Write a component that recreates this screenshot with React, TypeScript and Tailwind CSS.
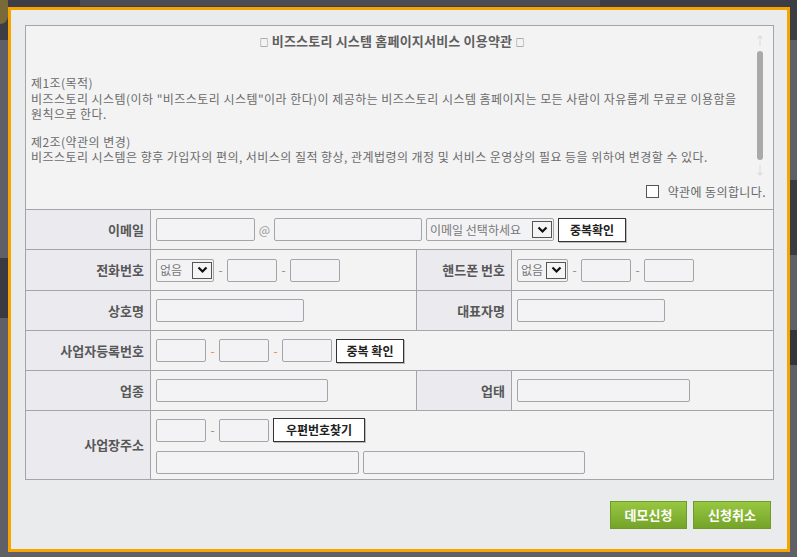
import React from "react";

const font = { fontFamily: '"Noto Sans CJK KR", "Noto Sans", sans-serif' };

function Input({ w }: { w: string }) {
  return (
    <div
      className={`${w} h-[23px] shrink-0 rounded-[2px] border border-[#a3a5a8] bg-[#f3f3f5]`}
    />
  );
}

function Chevron() {
  return (
    <svg width="11" height="8" viewBox="0 0 11 8">
      <path d="M1.5 1.5 L5.5 5.5 L9.5 1.5" fill="none" stroke="#111" strokeWidth="2.2" />
    </svg>
  );
}

function Select({ w, label }: { w: string; label: string }) {
  return (
    <div
      className={`${w} h-[23px] shrink-0 flex items-center justify-between rounded-[2px] border border-[#a3a5a8] bg-[#f3f3f5] pl-[3px] pr-[1px]`}
    >
      <span className="text-[12px] leading-none text-[#777]">{label}</span>
      <span className="w-[20px] h-[17px] flex items-center justify-center border border-[#555] bg-[#f5f5f5]">
        <Chevron />
      </span>
    </div>
  );
}

function Dash({ orange }: { orange?: boolean }) {
  return (
    <span
      className={`w-[13px] shrink-0 text-center text-[12px] ${orange ? "text-[#d98a4a]" : "text-[#888]"}`}
    >
      -
    </span>
  );
}

function SmallBtn({ w, children }: { w: string; children: React.ReactNode }) {
  return (
    <button
      type="button"
      className={`${w} h-[24px] shrink-0 border border-[#333] bg-white text-[12px] font-bold text-[#222] shadow-[1px_1px_0_#bbb]`}
    >
      {children}
    </button>
  );
}

function Label({ w, children, left }: { w: string; children: React.ReactNode; left?: boolean }) {
  return (
    <div
      className={`${w} shrink-0 self-stretch flex items-center justify-end pr-[6px] bg-[#ebebef] border-r border-[#a3a5a8] ${left ? "border-l" : ""} text-[13px] font-bold text-[#575757]`}
    >
      {children}
    </div>
  );
}

export default function App() {
  return (
    <div className="relative w-[797px] h-[557px] overflow-hidden bg-[#5f6067]" style={font}>
      {/* page behind the dialog */}
      <div className="absolute left-0 top-0 w-full h-[40px] bg-[#3d3e45]" />
      <div className="absolute left-[80px] top-0 w-[520px] h-[6px] bg-[#4c4d54]" />
      <div className="absolute left-[-8px] top-[-6px] w-[16px] h-[30px] rounded-full bg-[#7a6a3a]" />
      <div className="absolute left-0 top-[258px] w-[8px] h-[60px] bg-[#3a3b42]" />
      <div className="absolute right-0 top-[180px] w-[8px] h-[75px] bg-[#3a3b42]" />
      <div className="absolute right-0 top-[330px] w-[8px] h-[35px] bg-[#34353c]" />

      {/* dialog */}
      <div className="absolute left-[8px] top-[7px] w-[782px] h-[545px] border-[3px] border-[#f6a500] bg-[#eaebed] flex flex-col">
        <div className="ml-[14px] mt-[15px] w-[749px] border border-[#a3a5a8] bg-[#f3f3f4]">
          {/* terms */}
          <div className="relative h-[183px] pl-[5px] pr-[20px] text-[12px] leading-[15px] text-[#6b6b6b]">
            <div className="pt-[7px] text-center font-bold text-[#5f5f5f] text-[13px] tracking-[0.2px]">
              <span className="text-[9px] text-[#777] align-middle">□</span> 비즈스토리 시스템 홈페이지서비스 이용약관{" "}
              <span className="text-[9px] text-[#777] align-middle">□</span>
            </div>
            <div className="mt-[25px] tracking-[0.45px]">
              <div className="leading-[16px]">제1조(목적)</div>
              <div>
                비즈스토리 시스템(이하 "비즈스토리 시스템"이라 한다)이 제공하는 비즈스토리 시스템 홈페이지는 모든 사람이 자유롭게 무료로 이용함을
              </div>
              <div>원칙으로 한다.</div>
              <div className="h-[13px]" />
              <div>제2조(약관의 변경)</div>
              <div>
                비즈스토리 시스템은 향후 가입자의 편의, 서비스의 질적 향상, 관계법령의 개정 및 서비스 운영상의 필요 등을 위하여 변경할 수 있다.
              </div>
            </div>
            {/* scrollbar */}
            <div className="absolute right-[10px] top-[9px] w-[6px] flex flex-col items-center">
              <span className="text-[12px] leading-none text-[#d8d8d8]">↑</span>
              <div className="mt-[4px] w-[6px] h-[109px] rounded-full bg-[#a9a9a9]" />
              <span className="mt-[4px] text-[12px] leading-none text-[#d8d8d8]">↓</span>
            </div>
            <div className="absolute right-[7px] bottom-[10px] flex items-center gap-[9px]">
              <span className="w-[13px] h-[13px] border border-[#555] bg-white" />
              <span className="text-[12px] tracking-[0.4px] text-[#666]">약관에 동의합니다.</span>
            </div>
          </div>

          {/* email */}
          <div className="flex h-[40px] items-center border-t border-[#a3a5a8]">
            <Label w="w-[125px]">이메일</Label>
            <div className="flex items-center pl-[5px]">
              <Input w="w-[99px]" />
              <span className="w-[19px] text-center text-[12px] text-[#9a9a9a]">@</span>
              <Input w="w-[148px]" />
              <div className="w-[4px]" />
              <Select w="w-[128px]" label="이메일 선택하세요" />
              <div className="w-[4px]" />
              <SmallBtn w="w-[68px]">중복확인</SmallBtn>
            </div>
          </div>

          {/* phone */}
          <div className="flex h-[41px] items-center border-t border-[#a3a5a8]">
            <Label w="w-[125px]">전화번호</Label>
            <div className="w-[265px] flex items-center pl-[5px]">
              <Select w="w-[58px]" label="없음" />
              <Dash />
              <Input w="w-[50px]" />
              <Dash />
              <Input w="w-[50px]" />
            </div>
            <Label w="w-[96px]" left>
              핸드폰 번호
            </Label>
            <div className="flex items-center pl-[5px]">
              <Select w="w-[51px]" label="없음" />
              <Dash />
              <Input w="w-[50px]" />
              <Dash />
              <Input w="w-[50px]" />
            </div>
          </div>

          {/* company / ceo */}
          <div className="flex h-[40px] items-center border-t border-[#a3a5a8]">
            <Label w="w-[125px]">상호명</Label>
            <div className="w-[265px] flex items-center pl-[5px]">
              <Input w="w-[148px]" />
            </div>
            <Label w="w-[96px]" left>
              대표자명
            </Label>
            <div className="flex items-center pl-[5px]">
              <Input w="w-[148px]" />
            </div>
          </div>

          {/* business number */}
          <div className="flex h-[40px] items-center border-t border-[#a3a5a8]">
            <Label w="w-[125px]">사업자등록번호</Label>
            <div className="flex items-center pl-[5px]">
              <Input w="w-[50px]" />
              <Dash orange />
              <Input w="w-[50px]" />
              <Dash orange />
              <Input w="w-[50px]" />
              <div className="w-[4px]" />
              <SmallBtn w="w-[68px]">중복 확인</SmallBtn>
            </div>
          </div>

          {/* business type */}
          <div className="flex h-[40px] items-center border-t border-[#a3a5a8]">
            <Label w="w-[125px]">업종</Label>
            <div className="w-[265px] flex items-center pl-[5px]">
              <Input w="w-[172px]" />
            </div>
            <Label w="w-[96px]" left>
              업태
            </Label>
            <div className="flex items-center pl-[5px]">
              <Input w="w-[173px]" />
            </div>
          </div>

          {/* address */}
          <div className="flex h-[69px] border-t border-[#a3a5a8]">
            <Label w="w-[125px]">사업장주소</Label>
            <div className="flex flex-col gap-[9px] pl-[5px] pt-[7px]">
              <div className="flex items-center">
                <Input w="w-[50px]" />
                <Dash />
                <Input w="w-[50px]" />
                <div className="w-[4px]" />
                <SmallBtn w="w-[92px]">우편번호찾기</SmallBtn>
              </div>
              <div className="flex items-center gap-[4px]">
                <Input w="w-[203px]" />
                <Input w="w-[222px]" />
              </div>
            </div>
          </div>
        </div>

        {/* actions */}
        <div className="mt-[21px] mr-[16px] flex justify-end gap-[6px]">
          <button
            type="button"
            className="w-[77px] h-[28px] border border-[#6e9b2a] bg-gradient-to-b from-[#98c840] to-[#74a329] text-[13px] font-bold text-white"
          >
            데모신청
          </button>
          <button
            type="button"
            className="w-[78px] h-[28px] border border-[#6e9b2a] bg-gradient-to-b from-[#98c840] to-[#74a329] text-[13px] font-bold text-white"
          >
            신청취소
          </button>
        </div>
      </div>
    </div>
  );
}
